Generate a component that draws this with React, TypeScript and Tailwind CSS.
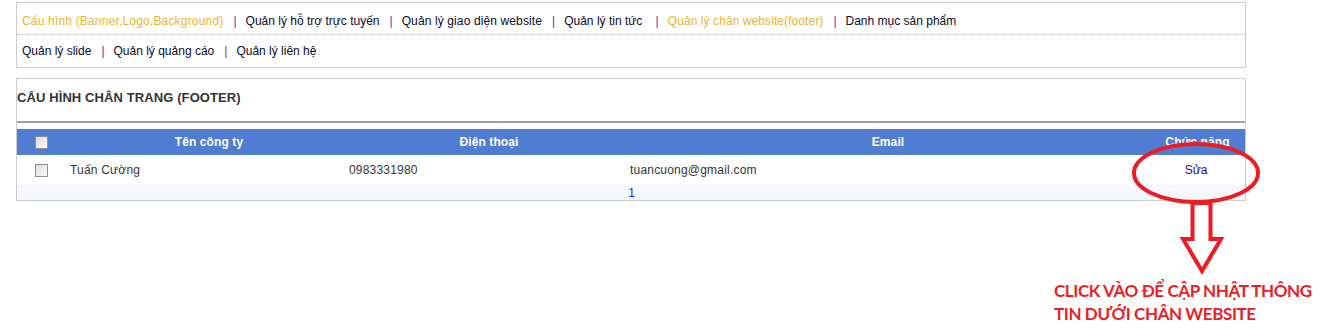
import React from 'react';

type NavItem = { label: string; active?: boolean; tr?: string };

const navRow1: NavItem[] = [
  { label: 'Cấu hình (Banner,Logo,Background)', active: true, tr: 'tracking-[0.18px]' },
  { label: 'Quản lý hỗ trợ trực tuyến' },
  { label: 'Quản lý giao diện website', tr: 'tracking-[0.12px]' },
  { label: 'Quản lý tin tức ' },
  { label: 'Quản lý chân website(footer)', active: true, tr: 'tracking-[0.08px]' },
  { label: 'Danh mục sản phẩm' },
];

const navRow2: NavItem[] = [
  { label: 'Quản lý slide' },
  { label: 'Quản lý quảng cáo' },
  { label: 'Quản lý liên hệ' },
];

function NavRow({ items }: { items: NavItem[] }) {
  return (
    <div className="flex items-center whitespace-pre">
      {items.map((item, i) => (
        <React.Fragment key={i}>
          {i > 0 && <span className="ml-[10px] mr-[9px] text-[#7b2a8c]">|</span>}
          <span className={`${item.tr ?? ''} ${item.active ? 'text-[#eeb32c]' : 'text-[#0a0a2a]'}`}>{item.label}</span>
        </React.Fragment>
      ))}
    </div>
  );
}

function Check() {
  return (
    <div className="h-[13px] w-[13px] border border-[#8e8f8f] bg-gradient-to-br from-[#dcdcdc] to-[#fbfbfb]" />
  );
}

export default function App() {
  return (
    <div className="relative h-[333px] w-[1321px] overflow-hidden bg-white pt-[2px] text-[12px] font-['Liberation_Sans',Arial,sans-serif]">
      {/* Top menu */}
      <div className="ml-[16px] w-[1230px] border border-[#cccccc]">
        <div className="flex h-[32px] items-center border-b border-dotted border-[#bbbbbb] pl-[5px] pt-[4px]">
          <NavRow items={navRow1} />
        </div>
        <div className="flex h-[32px] items-center pl-[5px]">
          <NavRow items={navRow2} />
        </div>
      </div>

      {/* Footer config box */}
      <div className="ml-[16px] mt-[10px] w-[1230px] border border-[#cccccc]">
        <div className="flex h-[42px] items-center pb-[4px] text-[13px] font-bold tracking-[0.1px] text-[#333333]">
          CẤU HÌNH CHÂN TRANG (FOOTER)
        </div>
        <div className="h-[2px] bg-[#a0a0a0]" />
        <div className="h-[6px]" />

        <div className="grid grid-cols-[53px_276px_280px_524px_95px]">
          {/* header */}
          <div className="flex h-[26px] items-center justify-center bg-[#507cd1] pr-[5px]">
            <Check />
          </div>
          <div className="flex h-[26px] items-center justify-center bg-[#507cd1] pl-[2px] font-bold tracking-[0.1px] text-white">Tên công ty</div>
          <div className="flex h-[26px] items-center justify-center bg-[#507cd1] pl-[6px] font-bold tracking-[0.1px] text-white">Điện thoại</div>
          <div className="flex h-[26px] items-center justify-center bg-[#507cd1] font-bold tracking-[0.1px] text-white">Email</div>
          <div className="flex h-[26px] items-center justify-center bg-[#507cd1] font-bold tracking-[0.1px] text-white">Chức năng</div>

          {/* data row */}
          <div className="flex h-[30px] items-center justify-center pr-[5px]">
            <Check />
          </div>
          <div className="flex h-[30px] items-center pl-0 tracking-[0.2px] text-[#333333]">Tuấn Cường</div>
          <div className="flex h-[30px] items-center pl-[3px] tracking-[0.2px] text-[#333333]">0983331980</div>
          <div className="flex h-[30px] items-center pl-[4px] tracking-[0.2px] text-[#333333]">tuancuong@gmail.com</div>
          <div className="flex h-[30px] items-center justify-center pr-[3px] text-[#1a0dab]">Sửa</div>

          {/* pager */}
          <div className="col-span-5 flex h-[15px] items-center justify-center bg-[#f5f7fe] leading-none text-[#1a1aee]">
            <span className="ml-[1px]">1</span>
          </div>
        </div>
      </div>

      {/* Annotation */}
      <svg className="pointer-events-none absolute left-0 top-0" width="1321" height="333">
        <ellipse cx="1196" cy="173" rx="62" ry="29" fill="none" stroke="#ed1c24" strokeWidth="4" />
        <polygon
          points="1192.5,203 1210.5,203 1210.5,239 1221,239 1202,271 1183,239 1192.5,239"
          fill="white"
          stroke="#ed1c24"
          strokeWidth="4"
          strokeLinejoin="miter"
        />
      </svg>
      <div className="absolute left-[1054px] top-[279px] text-[17px] font-bold leading-[23px] tracking-[-0.4px] text-[#ed1c24] font-['Lato',sans-serif]">
        CLICK VÀO ĐỂ CẬP NHẬT THÔNG
        <br />
        TIN DƯỚI CHÂN WEBSITE
      </div>
    </div>
  );
}
